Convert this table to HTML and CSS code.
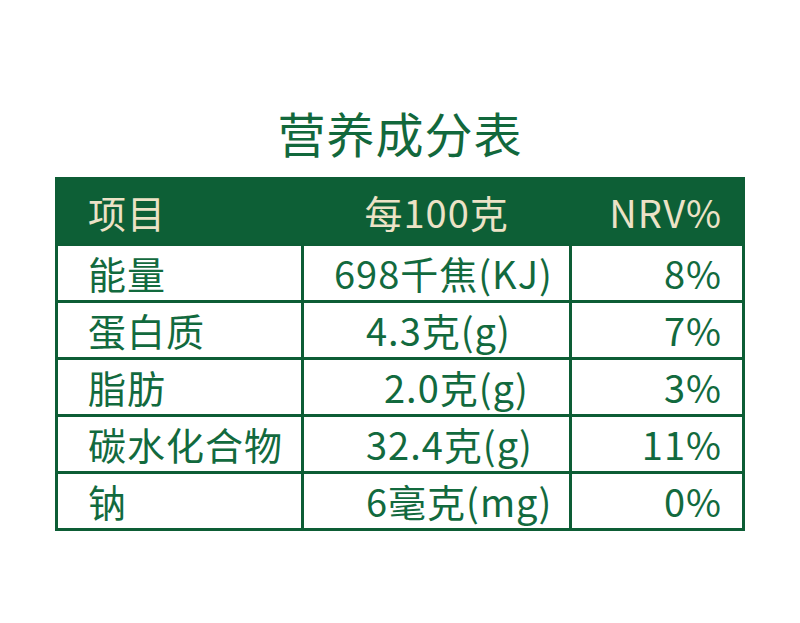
FILE: index.html
```html
<!DOCTYPE html>
<html lang="zh">
<head>
<meta charset="utf-8">
<link rel="stylesheet" href="styles.css">
</head>
<body>
<div class="page">
  <h1 class="title">营养成分表</h1>
  <table class="nutri">
    <colgroup>
      <col class="col1">
      <col class="col2">
      <col class="col3">
    </colgroup>
    <thead>
      <tr>
        <th class="c1">项目</th>
        <th class="c2">每100克</th>
        <th class="c3">NRV%</th>
      </tr>
    </thead>
    <tbody>
      <tr><td class="c1">能量</td><td class="c2 wide">698千焦(KJ)</td><td class="c3">8%</td></tr>
      <tr><td class="c1">蛋白质</td><td class="c2">4.3克(g)</td><td class="c3">7%</td></tr>
      <tr><td class="c1">脂肪</td><td class="c2 inset">2.0克(g)</td><td class="c3">3%</td></tr>
      <tr><td class="c1">碳水化合物</td><td class="c2">32.4克(g)</td><td class="c3">11%</td></tr>
      <tr><td class="c1">钠</td><td class="c2">6毫克(mg)</td><td class="c3">0%</td></tr>
    </tbody>
  </table>
</div>
</body>
</html>
```
FILE: styles.css
```css
html, body {
  margin: 0;
  padding: 0;
  background: #ffffff;
}
body {
  font-family: "Noto Sans CJK SC", "Noto Sans", sans-serif;
  color: #126a3e;
}
.page {
  width: 800px;
  height: 623px;
  display: flex;
  flex-direction: column;
  align-items: center;
  padding-top: 97px;
  box-sizing: border-box;
}
.title {
  margin: 0 0 10px 0;
  font-size: 48px;
  font-weight: 400;
  line-height: 70px;
  color: #12683c;
  letter-spacing: 1px;
}
.nutri {
  width: 687px;
  border-collapse: collapse;
  border: 3px solid #0d5d35;
  table-layout: fixed;
}
.col1 { width: 246px; }
.col2 { width: 268px; }
.col3 { width: 173px; }
.nutri th, .nutri td {
  font-size: 38px;
  font-weight: 400;
  line-height: 44px;
  padding: 0;
  white-space: nowrap;
}
.nutri thead tr {
  background: #0d5f36;
  height: 66px;
}
.nutri th {
  color: #ece2c6;
  text-align: left;
  vertical-align: middle;
}
.nutri tbody tr {
  height: 57px;
}
.nutri td {
  border: 3px solid #0d5d35;
  vertical-align: middle;
}
.nutri .c1 {
  padding-left: 30px;
  letter-spacing: 1px;
}
.nutri .c2 {
  padding-left: 62px;
  letter-spacing: 1px;
}
.nutri .c2.wide {
  padding-left: 30px;
}
.nutri .c2.inset {
  padding-left: 80px;
}
.nutri .c3 {
  text-align: right;
  padding-right: 20px;
  letter-spacing: 1px;
}
```
